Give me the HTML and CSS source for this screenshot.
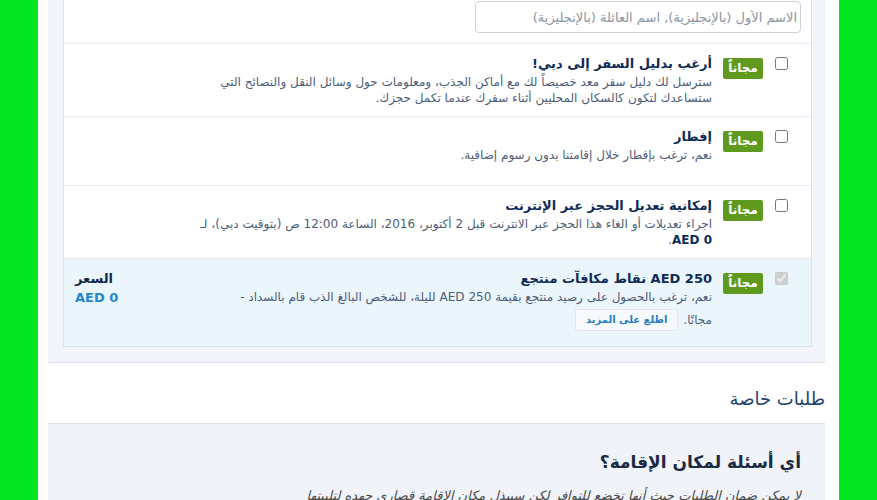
FILE: index.html
```html
<!DOCTYPE html>
<html lang="ar" dir="rtl">
<head>
  <meta charset="UTF-8" />
  <meta name="viewport" content="width=device-width, initial-scale=1.0"/>
  <title>تفاصيل الحجز</title>
  <link rel="stylesheet" href="styles.css">
</head>
<body>
  <div class="page">
    <div class="panel">
      <div class="options">
        <div class="name-row">
          <input type="text" class="name-input" placeholder="الاسم الأول (بالإنجليزية), اسم العائلة (بالإنجليزية)">
        </div>

        <div class="option">
          <input type="checkbox" class="option-check">
          <span class="badge">مجاناً</span>
          <div class="option-body">
            <div class="option-title">أرغب بدليل السفر إلى دبي!</div>
            <p class="option-desc">سترسل لك دليل سفر معد خصيصاً لك مع أماكن الجذب، ومعلومات حول وسائل النقل والنصائح التي ستساعدك لتكون كالسكان المحليين أثناء سفرك عندما تكمل حجزك.</p>
          </div>
          <div class="option-price"></div>
        </div>

        <div class="option">
          <input type="checkbox" class="option-check">
          <span class="badge">مجاناً</span>
          <div class="option-body">
            <div class="option-title">إفطار</div>
            <p class="option-desc">نعم، ترغب بإفطار خلال إقامتنا بدون رسوم إضافية.</p>
          </div>
          <div class="option-price"></div>
        </div>

        <div class="option">
          <input type="checkbox" class="option-check">
          <span class="badge">مجاناً</span>
          <div class="option-body">
            <div class="option-title">إمكانية تعديل الحجز عبر الإنترنت</div>
            <p class="option-desc">اجراء تعديلات أو الغاء هذا الحجز عبر الانترنت قبل 2 أكتوبر، 2016، الساعة 12:00 ص (بتوقيت دبي)، لـ <span class="nowrap"><b>0 AED</b>.</span></p>
          </div>
          <div class="option-price"></div>
        </div>

        <div class="option selected">
          <input type="checkbox" class="option-check" checked disabled>
          <span class="badge">مجاناً</span>
          <div class="option-body">
            <div class="option-title">250 AED نقاط مكافآت منتجع</div>
            <p class="option-desc">نعم، ترغب بالحصول على رصيد منتجع بقيمة 250 AED لليلة، للشخص البالغ الذب قام بالسداد - <span class="nowrap">مجانًا.<a class="more-btn">اطلع على المزيد</a></span></p>
          </div>
          <div class="option-price">
            <div class="price-label">السعر</div>
            <div class="price-value">AED 0</div>
          </div>
        </div>
      </div>
    </div>

    <h2 class="section-title">طلبات خاصة</h2>

    <div class="requests">
      <h3>أي أسئلة لمكان الإقامة؟</h3>
      <p class="requests-note">لا يمكن ضمان الطلبات حيث أنها تخضع للتوافر لكن سيبذل مكان الإقامة قصارى جهده لتلبيتها</p>
    </div>
  </div>
</body>
</html>
```

FILE: styles.css
```css
body {
  margin: 0;
  background-color: #02e623;
  font-family: 'DejaVu Sans', sans-serif;
  color: #4d5d78;
}

.page {
  width: 777px;
  margin: 0 38px;
  padding: 0 14px 40px 10px;
  background-color: white;
}

.panel {
  background-color: #f1f4f9;
  padding: 0 13px 15px 15px;
  border-bottom: 1px solid #dde2e9;
}

/* the box continues from above the visible area, so no top border */
.options {
  background-color: white;
  border: 1px solid #dde3ea;
  border-top: none;
}

.name-row {
  padding: 1px 10px 10px 0;
  border-bottom: 1px solid #e6eaef;
}

.name-input {
  display: block;
  box-sizing: border-box;
  width: 326px;
  height: 32px;
  padding: 0 3px;
  border: 1px solid #cdd2d8;
  border-radius: 4px;
  font-family: inherit;
  font-size: 13px;
}

.name-input::placeholder {
  color: #8d96a3;
}

.option {
  display: flex;
  align-items: flex-start;
  box-sizing: border-box;
  min-height: 69px;
  padding: 10px 23px 10px 11px;
  border-bottom: 1px solid #e6eaef;
}

.option:last-child {
  border-bottom: none;
}

.option.selected {
  background-color: #ebf5fc;
}

.option-check {
  width: 13px;
  height: 13px;
  margin: 3px 0 0 12px;
  flex-shrink: 0;
}

.badge {
  flex-shrink: 0;
  width: 40px;
  height: 21px;
  margin: 4px 0 0 11px;
  background-color: #5f9a1f;
  color: white;
  font-size: 12px;
  font-weight: bold;
  line-height: 21px;
  text-align: center;
  border-radius: 2px;
}

.option-body {
  flex: 1;
}

.option-title {
  color: #0f2c56;
  font-size: 13px;
  font-weight: bold;
  line-height: 20px;
}

.option-desc {
  margin: 0;
  font-size: 12px;
  line-height: 16px;
}

.option-desc b {
  color: #0f2c56;
}

.nowrap {
  white-space: nowrap;
}

.more-btn {
  display: inline-block;
  box-sizing: border-box;
  margin: 4px 5px 5px 0;
  padding: 0 10px;
  height: 22px;
  line-height: 20px;
  background-color: #f6fafd;
  border: 1px solid #dfe7ee;
  border-radius: 2px;
  color: #2a7dc4;
  font-weight: bold;
  font-size: 10px;
  vertical-align: middle;
}

.option-price {
  width: 100px;
  flex-shrink: 0;
  margin-right: 10px;
  font-size: 13px;
  font-weight: bold;
  line-height: 19px;
  text-align: left;
}

.price-label {
  color: #132847;
}

.price-value {
  color: #2386d1;
}

.section-title {
  margin: 0;
  padding: 24px 0 12px;
  border-bottom: 1px solid #dde2e9;
  color: #1e3e6e;
  font-size: 18px;
  font-weight: normal;
  line-height: 24px;
}

.requests {
  background-color: #f0f3f8;
  padding: 26px 24px 20px;
}

.requests h3 {
  margin: 0 0 14px;
  color: #1b2a44;
  font-size: 17px;
  line-height: 24px;
}

.requests-note {
  margin: 0;
  font-size: 13px;
  font-style: italic;
  color: #4a4a4a;
}
```
